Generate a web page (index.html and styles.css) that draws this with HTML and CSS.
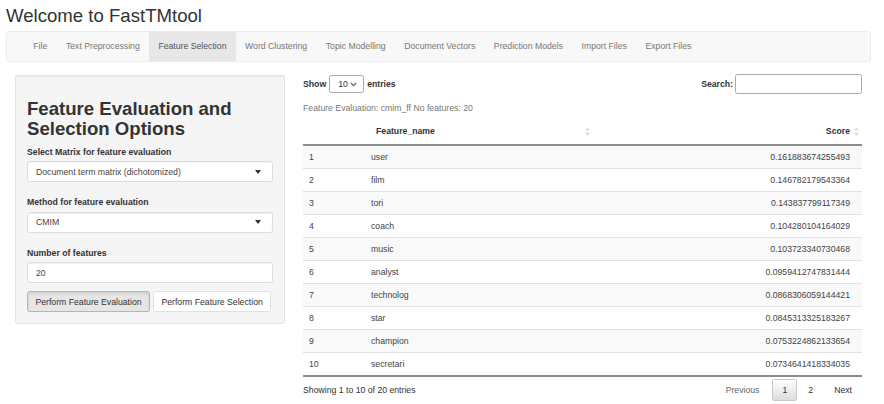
FILE: index.html
```html
<!DOCTYPE html>
<html>
<head>
<meta charset="utf-8">
<title>FastTMtool</title>
<link rel="stylesheet" href="styles.css">
</head>
<body>
<div class="page">
  <h2 class="title">Welcome to FastTMtool</h2>
  <nav class="navbar">
    <ul class="tabs">
      <li><a>File</a></li>
      <li><a>Text Preprocessing</a></li>
      <li class="active"><a>Feature Selection</a></li>
      <li><a>Word Clustering</a></li>
      <li><a>Topic Modelling</a></li>
      <li><a>Document Vectors</a></li>
      <li><a>Prediction Models</a></li>
      <li><a>Import Files</a></li>
      <li><a>Export Files</a></li>
    </ul>
  </nav>
  <div class="row">
    <aside class="sidebar">
      <div class="well">
        <h2 class="well-title">Feature Evaluation and Selection Options</h2>
        <div class="fg">
          <label class="lbl">Select Matrix for feature evaluation</label>
          <div class="sel"><span>Document term matrix (dichotomized)</span><svg class="caret" width="6" height="4" viewBox="0 0 6 4"><path d="M0 0H6L3 4Z" fill="#333"/></svg></div>
        </div>
        <div class="fg">
          <label class="lbl">Method for feature evaluation</label>
          <div class="sel"><span>CMIM</span><svg class="caret" width="6" height="4" viewBox="0 0 6 4"><path d="M0 0H6L3 4Z" fill="#333"/></svg></div>
        </div>
        <div class="fg fg-last">
          <label class="lbl">Number of features</label>
          <div class="inp">20</div>
        </div>
        <div class="btns">
          <button class="btn btn-active">Perform Feature Evaluation</button>
          <button class="btn">Perform Feature Selection</button>
        </div>
      </div>
    </aside>
    <main class="main">
      <div class="dt-top">
        <div class="len">Show <span class="lensel">10<svg width="7" height="5" viewBox="0 0 7 5"><path d="M0.8 0.8L3.5 3.6L6.2 0.8" fill="none" stroke="#555" stroke-width="1.1"/></svg></span> entries</div>
        <div class="search"><span class="slabel">Search:</span><span class="sinput"></span></div>
      </div>
      <div class="caption">Feature Evaluation: cmim_ff No features: 20</div>
      <table class="dt">
        <colgroup><col class="c1"><col class="c2"><col class="c3"></colgroup>
        <thead>
          <tr>
            <th class="th-idx"></th>
            <th class="th-name">Feature_name<svg class="sort" width="5" height="9" viewBox="0 0 5 9"><path d="M2.5 0L5 3.5H0Z M2.5 9L0 5.5H5Z" fill="#ddd"/></svg></th>
            <th class="th-score">Score<svg class="sort" width="5" height="9" viewBox="0 0 5 9"><path d="M2.5 0L5 3.5H0Z M2.5 9L0 5.5H5Z" fill="#ddd"/></svg></th>
          </tr>
        </thead>
        <tbody>
          <tr><td>1</td><td>user</td><td class="num">0.161883674255493</td></tr>
          <tr><td>2</td><td>film</td><td class="num">0.146782179543364</td></tr>
          <tr><td>3</td><td>tori</td><td class="num">0.143837799117349</td></tr>
          <tr><td>4</td><td>coach</td><td class="num">0.104280104164029</td></tr>
          <tr><td>5</td><td>music</td><td class="num">0.103723340730468</td></tr>
          <tr><td>6</td><td>analyst</td><td class="num">0.0959412747831444</td></tr>
          <tr><td>7</td><td>technolog</td><td class="num">0.0868306059144421</td></tr>
          <tr><td>8</td><td>star</td><td class="num">0.0845313325183267</td></tr>
          <tr><td>9</td><td>champion</td><td class="num">0.0753224862133654</td></tr>
          <tr><td>10</td><td>secretari</td><td class="num">0.0734641418334035</td></tr>
        </tbody>
      </table>
      <div class="dt-bottom">
        <div class="info">Showing 1 to 10 of 20 entries</div>
        <div class="pager">
          <span class="pb disabled">Previous</span>
          <span class="pb current">1</span>
          <span class="pb">2</span>
          <span class="pb">Next</span>
        </div>
      </div>
    </main>
  </div>
</div>
</body>
</html>
```

FILE: styles.css
```css
* { box-sizing: border-box; }
html, body { margin: 0; padding: 0; background: #fff; }
body {
  font-family: "Liberation Sans", Arial, sans-serif;
  font-size: 8.7px;
  line-height: 12.4px;
  color: #333;
}
.page { padding: 0 13px 0 6px; }
.title {
  font-size: 18.6px;
  font-weight: normal;
  line-height: 20.5px;
  margin: 6px 0 4.5px 0;
  color: #333;
}
.navbar {
  height: 31px;
  background: #f8f8f8;
  border: 1px solid #ececec;
  border-radius: 2.5px;
  margin-bottom: 13px;
}
.tabs {
  list-style: none;
  margin: 0;
  padding: 0 0 0 17px;
  display: flex;
  height: 100%;
}
.tabs li a {
  display: block;
  padding: 0 9.3px;
  line-height: 29px;
  color: #777;
}
.tabs li.active a { background: #e7e7e7; color: #555; }

.row { display: flex; padding: 0 9px; }
.sidebar { width: 270px; flex: none; }
.main { flex: 1; margin-left: 18px; }

.well {
  background: #f5f5f5;
  border: 1px solid #e3e3e3;
  border-radius: 2.5px;
  padding: 12px 11px 11px 11px;
  box-shadow: inset 0 1px 1px rgba(0,0,0,0.05);
}
.well-title {
  font-size: 18.6px;
  font-weight: bold;
  line-height: 20.5px;
  margin: 10.5px 0 6.5px 0;
  color: #333;
}
.fg { margin-bottom: 14px; }
.fg-last { margin-bottom: 8px; }
.lbl {
  display: block;
  font-weight: bold;
  margin-bottom: 3px;
}
.sel, .inp {
  height: 21px;
  background: #fff;
  border: 1px solid #dcdcdc;
  border-radius: 2.5px;
  padding: 0 11px 0 8px;
  display: flex;
  align-items: center;
  justify-content: space-between;
  box-shadow: inset 0 1px 1px rgba(0,0,0,0.06);
  color: #444;
}
.btns { display: flex; gap: 3px; }
.btn {
  font-family: inherit;
  font-size: 8.7px;
  height: 21px;
  padding: 0 7.4px;
  color: #333;
  background: #fff;
  border: 1px solid #e0e0e0;
  border-radius: 2.5px;
}
.btn-active {
  background: #e6e6e6;
  border-color: #b5b5b5;
  box-shadow: inset 0 2px 3px rgba(0,0,0,0.1);
}

.dt-top {
  display: flex;
  justify-content: space-between;
  align-items: center;
  height: 20px;
  margin-top: -1px;
}
.len { font-weight: bold; display: flex; align-items: center; }
.lensel {
  display: inline-flex;
  align-items: center;
  justify-content: space-between;
  width: 35px;
  height: 18px;
  margin: 0 3px;
  padding: 0 6px 0 8px;
  border: 1px solid #aaa;
  border-radius: 2.5px;
  font-weight: normal;
  color: #333;
}
.search { display: flex; align-items: center; }
.slabel { font-weight: bold; margin-right: 2px; }
.sinput {
  display: inline-block;
  width: 127px;
  height: 20px;
  border: 1px solid #aaa;
  border-radius: 2.5px;
}
.caption {
  color: #777;
  margin-top: 8px;
  margin-bottom: 5px;
}
.dt {
  width: 100%;
  border-collapse: collapse;
  table-layout: fixed;
}
.c1 { width: 62px; }
.c2 { width: 228px; }
.dt th {
  font-weight: bold;
  padding: 6px 11px 6px 11px;
  border-bottom: 2px solid #8c8c8c;
  text-align: left;
  position: relative;
}
.th-score { text-align: right !important; padding-right: 12px !important; }
.sort { position: absolute; right: 3px; top: 8px; }
.dt td {
  padding: 5px 6px 5px 6px;
  border-top: 1px solid #e2e2e2;
  line-height: 12px;
  color: #444;
}
.dt tbody tr:first-child td { border-top: none; height: 23px; }
.dt tbody tr:nth-child(odd) td { background: #f9f9f9; }
.dt tbody tr:last-child td { border-bottom: 2px solid #8c8c8c; }
.dt td.num { text-align: right; padding-right: 12px; }

.dt-bottom {
  display: flex;
  justify-content: space-between;
  align-items: center;
  margin-top: 2px;
}
.pager { display: flex; align-items: center; }
.pb {
  display: inline-block;
  padding: 0 9px;
  line-height: 20px;
  margin-left: 1px;
  border: 1px solid transparent;
  border-radius: 2px;
  color: #333;
}
.pb.disabled { color: #666; margin-right: 2px; }
.pb.current {
  background: linear-gradient(#ffffff, #dcdcdc);
  border-color: #cacaca;
}
```
